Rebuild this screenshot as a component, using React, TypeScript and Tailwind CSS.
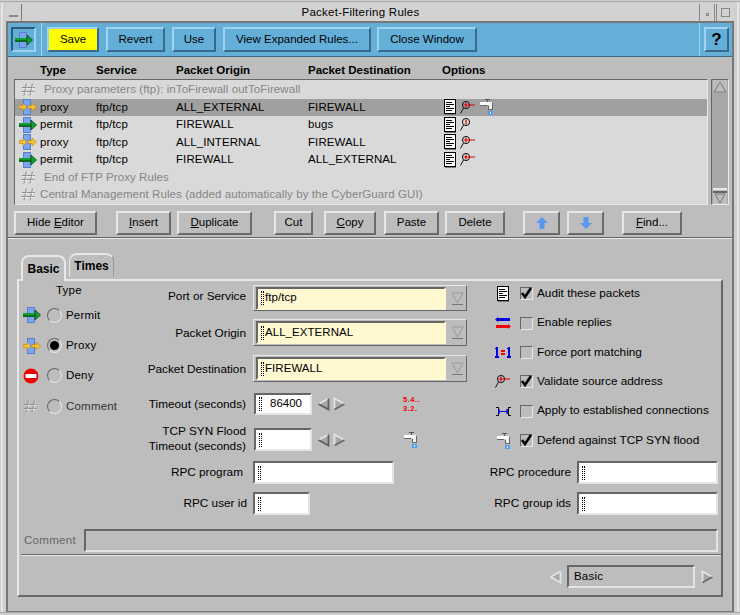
import React from "react";

const F = "font-['Liberation_Sans',Arial,sans-serif]";

function Permit() {
  return (
    <svg className="shrink-0" width="18" height="16" viewBox="0 0 18 16" shapeRendering="crispEdges">
      <rect x="4.5" y="0.5" width="7" height="15" fill="#78a4f0" stroke="#5a7fc8" />
      <rect x="0" y="6" width="13" height="2" fill="#10a030" />
      <rect x="0" y="8" width="13" height="2" fill="#0c6a20" />
      <path d="M12 3 L17.5 8 L12 13 Z" fill="#10a030" stroke="#063010" strokeWidth="0.7" shapeRendering="auto" />
    </svg>
  );
}
function Proxy() {
  return (
    <svg className="shrink-0" width="18" height="16" viewBox="0 0 18 16" shapeRendering="crispEdges">
      <rect x="4.5" y="0.5" width="7" height="15" fill="#78a4f0" stroke="#5a7fc8" />
      <path d="M0 6.5H4V4L8 8L4 12V9.5H0Z" fill="#f8c030" stroke="#a07818" strokeWidth="0.5" shapeRendering="auto" />
      <path d="M9 6.5H13V4L17.5 8L13 12V9.5H9Z" fill="#f8c030" stroke="#a07818" strokeWidth="0.5" shapeRendering="auto" />
    </svg>
  );
}
function Hash() {
  return (
    <svg className="shrink-0" width="15" height="13" viewBox="0 0 15 13">
      <path d="M5.5 0.5L3 12.5M11.5 0.5L9 12.5M1 4.5H14M0.5 8.5H13.5" stroke="#8c8c8c" strokeWidth="1.2" fill="none" />
      <path d="M6.5 1L4 13M12.5 1L10 13M1 5.5H14M0.5 9.5H13.5" stroke="#ececec" strokeWidth="0.6" fill="none" />
    </svg>
  );
}
function Doc() {
  return (
    <svg className="shrink-0" width="12" height="16" viewBox="0 0 12 16" shapeRendering="crispEdges">
      <rect x="0.5" y="0.5" width="11" height="14" fill="#fff" stroke="#000" />
      <rect x="1" y="15" width="11" height="1" fill="#777" />
      <path d="M2 3.5H8M2 5.5H10M2 7.5H6M2 9.5H10M2 11.5H8" stroke="#000" />
    </svg>
  );
}
function Lens({ line = true }: { line?: boolean }) {
  return (
    <svg className="shrink-0" width="16" height="15" viewBox="0 0 16 15">
      <circle cx="6" cy="5" r="3.6" fill="none" stroke="#111" />
      <path d="M3.5 8L0.5 13.5" stroke="#111" />
      <path d="M6 2.5V7.5" stroke="#e00000" strokeWidth="1.2" />
      {line && <path d="M3.5 5H15" stroke="#e00000" />}
    </svg>
  );
}
function Faucet() {
  return (
    <svg className="shrink-0" width="13" height="16" viewBox="0 0 13 16" shapeRendering="crispEdges">
      <rect x="5" y="0" width="5" height="1" fill="#555" />
      <rect x="7" y="1" width="1" height="2" fill="#555" />
      <rect x="0" y="3" width="9" height="3" fill="#fff" />
      <rect x="0" y="6" width="7" height="1" fill="#666" />
      <rect x="9" y="3" width="3" height="7" fill="#f4f4f4" />
      <rect x="8" y="7" width="1" height="3" fill="#666" />
      <rect x="12" y="4" width="1" height="6" fill="#666" />
      <rect x="8" y="10" width="5" height="1" fill="#666" />
      <rect x="8" y="12" width="5" height="4" fill="#4a9ff0" />
      <rect x="10" y="13" width="1" height="2" fill="#fff" />
    </svg>
  );
}
function NoEntry() {
  return (
    <svg className="shrink-0" width="16" height="16" viewBox="0 0 16 16">
      <circle cx="8" cy="8" r="7.5" fill="#f00000" />
      <rect x="2.5" y="6" width="11" height="4" fill="#fff" />
    </svg>
  );
}
function Replies() {
  return (
    <svg className="shrink-0" width="16" height="13" viewBox="0 0 16 13" shapeRendering="crispEdges">
      <rect x="2" y="1" width="13" height="3" fill="#0000e0" />
      <path d="M3 0V5L0 2.5Z" fill="#0000e0" shapeRendering="auto" />
      <rect x="1" y="8" width="13" height="3" fill="#f00000" />
      <path d="M13 7V12L16 9.5Z" fill="#f00000" shapeRendering="auto" />
    </svg>
  );
}
function PortMatch() {
  return (
    <svg className="shrink-0" width="16" height="12" viewBox="0 0 16 12" shapeRendering="crispEdges">
      <path d="M1 1H3V10H4V12H0V10H1V3H0V2H1Z" fill="#0000e0" />
      <path d="M13 1H15V10H16V12H12V10H13V3H12V2H13Z" fill="#0000e0" />
      <rect x="6" y="4" width="4" height="1.5" fill="#f00000" />
      <rect x="6" y="7" width="4" height="1.5" fill="#f00000" />
    </svg>
  );
}
function Established() {
  return (
    <svg className="shrink-0" width="16" height="9" viewBox="0 0 16 9" shapeRendering="crispEdges">
      <path d="M0.5 0.5H3V8.5H0.5M15.5 0.5H13V8.5H15.5" fill="none" stroke="#111" />
      <rect x="4" y="4" width="8" height="1" fill="#0000e0" />
      <path d="M4 2V7L3.5 4.5ZM12 2V7L12.5 4.5Z" stroke="#0000e0" fill="#0000e0" shapeRendering="auto" />
    </svg>
  );
}
function Arrow({ dir, dark = false }: { dir: "left" | "right"; dark?: boolean }) {
  return (
    <svg className="shrink-0" width="13" height="14" viewBox="0 0 13 14">
      {dir === "left" ? (
        <>
          <path d="M1.5 7L11.5 1.5V12.5Z" fill="#a8a8a8" />
          <path d="M1.5 7L11.5 1.5" stroke="#e4e4e4" strokeWidth="1.8" />
          <path d="M1.5 7L11.5 12.5V1.5" stroke={dark ? "#5f5f5f" : "#e4e4e4"} strokeWidth="1.8" fill="none" />
        </>
      ) : (
        <>
          <path d="M1.5 1.5L11.5 7L1.5 12.5Z" fill="#a8a8a8" />
          <path d="M1.5 12.5V1.5L11.5 7" stroke="#e4e4e4" strokeWidth="1.8" fill="none" />
          <path d="M1.5 12.5L11.5 7" stroke="#6a6a6a" strokeWidth="1.8" />
        </>
      )}
    </svg>
  );
}
function UpDown({ up }: { up: boolean }) {
  return (
    <svg className="shrink-0" width="12" height="12" viewBox="0 0 12 12">
      <path d={up ? "M6 0L12 6H8.5V12H3.5V6H0Z" : "M6 12L12 6H8.5V0H3.5V6H0Z"} fill="#5b97f0" />
    </svg>
  );
}
function Caret() {
  return <span className="inline-block h-[14px] w-[3px] shrink-0 border-x border-dotted border-black" />;
}

function GrayBtn({ w, ml, children }: { w: string; ml: string; children: React.ReactNode }) {
  return (
    <div className={`${w} ${ml} flex h-[24px] shrink-0 items-center justify-center border-2 border-t-[#e6e6e6] border-l-[#e6e6e6] border-r-[#6a6a6a] border-b-[#6a6a6a] bg-[#bdbdbd] text-[11.5px] text-black`}>
      {children}
    </div>
  );
}
function BlueBtn({ w, ml, children, yellow }: { w: string; ml: string; children: React.ReactNode; yellow?: boolean }) {
  return (
    <div className={`${w} ${ml} flex h-[25px] shrink-0 items-center justify-center border-2 border-t-[#9fd2ec] border-l-[#9fd2ec] border-r-[#38688a] border-b-[#38688a] text-[11.5px] text-black ${yellow ? "bg-[#ffff00]" : "bg-[#64afd8]"}`}>
      {children}
    </div>
  );
}

const COLS = "grid grid-cols-[56px_80px_132px_134px_1fr]";

function Row({ icon, type, service, origin, dest, opts, selected }: any) {
  return (
    <div className={`flex h-[17.5px] items-center text-[11.5px] tracking-[0.08px] text-black ${selected ? "bg-[#a0a0a0]" : ""}`}>
      <div className="flex w-[24px] shrink-0 justify-center pl-[2px]">{icon}</div>
      <div className={`${COLS} flex-1 pl-[1px]`}>
        <span>{type}</span>
        <span>{service}</span>
        <span>{origin}</span>
        <span>{dest}</span>
        <span className="flex items-center gap-[4px] pl-[2px]">{opts}</span>
      </div>
    </div>
  );
}
function CommentRow({ text, pl }: { text: string; pl: string }) {
  return (
    <div className="flex h-[17.5px] items-center text-[11.5px] tracking-[0.08px] text-[#858585]">
      <div className="flex w-[24px] shrink-0 justify-center pl-[2px]"><Hash /></div>
      <span className={pl}>{text}</span>
    </div>
  );
}
function TypeRow({ icon, label, on, dim }: { icon: React.ReactNode; label: string; on?: boolean; dim?: boolean }) {
  return (
    <div className="flex h-[30.4px] items-center">
      <div className="flex w-[22px] shrink-0 justify-start pl-[4px]">{icon}</div>
      <div className="ml-[6px] flex h-[15px] w-[15px] shrink-0 items-center justify-center rounded-full border border-t-[#666] border-l-[#666] border-r-[#e8e8e8] border-b-[#e8e8e8]">
        {on && <div className="h-[9px] w-[9px] rounded-full bg-black" />}
      </div>
      <span className={`ml-[4px] text-[11.5px] tracking-[0.2px] ${dim ? "text-[#333]" : "text-black"}`}>{label}</span>
    </div>
  );
}
function Combo({ h, mt, value }: { h: string; mt: string; value: string }) {
  return (
    <div className={`${mt} ml-[153px] flex ${h} w-[214px] items-center border border-t-[#e8e8e8] border-l-[#e8e8e8] border-r-[#666] border-b-[#666] pl-[2px] pr-[1px]`}>
      <div className="flex h-full max-h-[23px] w-[191px] items-center gap-[1px] border-2 border-t-[#666] border-l-[#666] border-r-[#fff8d0] border-b-[#fff8d0] bg-[#fff8d0] pl-[3px] text-[11.5px] tracking-[0.05px] text-black">
        <Caret />
        <span>{value}</span>
      </div>
      <div className="ml-[3px] flex w-[16px] flex-col items-center">
        <svg width="13" height="13" viewBox="0 0 13 13">
          <path d="M1 1H12L6.5 11Z" fill="#bdbdbd" stroke="#999" />
          <path d="M1 12.5H12" stroke="#777" />
        </svg>
      </div>
    </div>
  );
}
function Field({ w, h = "h-[23px]", children, bg = "bg-white" }: { w: string; h?: string; children?: React.ReactNode; bg?: string }) {
  return (
    <div className={`${w} ${h} ${bg} flex shrink-0 items-center border-2 border-t-[#666] border-l-[#666] border-r-[#e4e4e4] border-b-[#e4e4e4] pl-[3px] text-[11.5px] text-black`}>
      {children}
    </div>
  );
}
function OptRow({ icon, label, checked }: { icon: React.ReactNode; label: string; checked?: boolean }) {
  return (
    <div className="flex h-[29.4px] items-center">
      <div className="flex w-[16px] shrink-0 justify-center">{icon}</div>
      <div className="relative ml-[9px] h-[13px] w-[13px] shrink-0 border border-t-[#666] border-l-[#666] border-r-[#e8e8e8] border-b-[#e8e8e8]">
        {checked && (
          <svg className="absolute -left-px -top-[2px]" width="13" height="14" viewBox="0 0 13 14">
            <path d="M2 7L5 11L11 2" stroke="#000" strokeWidth="2.6" fill="none" />
          </svg>
        )}
      </div>
      <span className="ml-[4px] whitespace-nowrap text-[11.8px] text-black">{label}</span>
    </div>
  );
}

export default function App() {
  const U = ({ c }: { c: string }) => <span className="underline">{c}</span>;
  return (
    <div className={`${F} relative h-[615px] w-[740px] overflow-hidden bg-[#cfcfcf] pt-[1px]`}>
      <div className="h-[612px] border-y border-[#a8a8a8] px-[1px]">
        <div className="flex h-full flex-col border-x-2 border-[#e4e4e4] px-[3px] pt-[2px]">
          {/* Title bar */}
          <div className="flex h-[19px] items-center border-b-2 border-[#777] bg-[#d2d2d2]">
            <div className="flex h-[17px] w-[16px] items-end justify-center border-r border-[#777] pb-[4px]">
              <div className="h-[2px] w-[9px] border border-[#888]" />
            </div>
            <span className="flex-1 text-center text-[11.5px] tracking-[0.25px] text-black">Packet-Filtering Rules</span>
            <div className="flex h-[17px] w-[16px] items-end justify-center border-x border-[#888] pb-[5px]">
              <div className="h-[3px] w-[3px] border border-[#888]" />
            </div>
            <div className="ml-[1px] flex h-[17px] w-[18px] items-center justify-center border-l border-[#888]">
              <div className="h-[9px] w-[9px] border border-[#888]" />
            </div>
          </div>

          {/* Body */}
          <div className="flex flex-1 flex-col border-x-2 border-b border-x-[#777] border-b-[#777] bg-[#bdbdbd]">
            {/* Toolbar */}
            <div className="flex h-[34px] shrink-0 items-center border-b border-[#38688a] bg-[#64afd8]">
              <div className="flex h-full w-[34px] shrink-0 items-center justify-center border-r border-[#9fd2ec] pr-[2px]">
                <div className="flex h-[25px] w-[25px] items-center justify-center border-2 border-t-[#2f5a78] border-l-[#2f5a78] border-r-[#9fd2ec] border-b-[#9fd2ec]">
                  <Permit />
                </div>
              </div>
              <BlueBtn w="w-[52px]" ml="ml-[5px]" yellow>Save</BlueBtn>
              <BlueBtn w="w-[59px]" ml="ml-[7px]">Revert</BlueBtn>
              <BlueBtn w="w-[44px]" ml="ml-[7px]">Use</BlueBtn>
              <BlueBtn w="w-[148px]" ml="ml-[7px]">View Expanded Rules...</BlueBtn>
              <BlueBtn w="w-[100px]" ml="ml-[6px]">Close Window</BlueBtn>
              <div className="ml-[222px] flex h-full w-[1px] shrink-0 bg-[#9fd2ec]" />
              <div className="ml-[4px] flex h-[25px] w-[25px] shrink-0 items-center justify-center border-2 border-t-[#9fd2ec] border-l-[#9fd2ec] border-r-[#38688a] border-b-[#38688a] bg-[#64afd8] text-[17px] font-bold text-black">?</div>
            </div>

            {/* Column headers */}
            <div className={`${COLS} h-[22px] shrink-0 items-end pl-[32px] text-[11.5px] font-bold text-black`}>
              <span>Type</span>
              <span>Service</span>
              <span>Packet Origin</span>
              <span>Packet Destination</span>
              <span>Options</span>
            </div>

            {/* List */}
            <div className="flex h-[126px] shrink-0">
              <div className="ml-[6px] h-full w-[694px] shrink-0 border border-t-[#666] border-l-[#666] border-r-[#e8e8e8] border-b-[#e8e8e8] bg-[#d9d9d9] pt-[1px]">
                <CommentRow text="Proxy parameters (ftp): inToFirewall outToFirewall" pl="pl-[5px]" />
                <Row selected icon={<Proxy />} type="proxy" service="ftp/tcp" origin="ALL_EXTERNAL" dest="FIREWALL" opts={<><Doc /><Lens /><Faucet /></>} />
                <Row icon={<Permit />} type="permit" service="ftp/tcp" origin="FIREWALL" dest="bugs" opts={<><Doc /><Lens line={false} /></>} />
                <Row icon={<Proxy />} type="proxy" service="ftp/tcp" origin="ALL_INTERNAL" dest="FIREWALL" opts={<><Doc /><Lens /></>} />
                <Row icon={<Permit />} type="permit" service="ftp/tcp" origin="FIREWALL" dest="ALL_EXTERNAL" opts={<><Doc /><Lens /></>} />
                <CommentRow text="End of FTP Proxy Rules" pl="pl-[5px]" />
                <CommentRow text="Central Management Rules (added automatically by the CyberGuard GUI)" pl="pl-[1px]" />
              </div>
              <div className="ml-[3px] flex h-full w-[18px] shrink-0 flex-col items-center border border-t-[#666] border-l-[#666] border-r-[#e8e8e8] border-b-[#e8e8e8] bg-[#a8a8a8]">
                <svg width="14" height="13" viewBox="0 0 14 13" className="shrink-0 bg-[#bdbdbd]"><path d="M7 2L13 12H1Z" fill="#bdbdbd" stroke="#777" /></svg>
                <div className="h-[95px] w-full" />
                <div className="h-[5px] w-[14px] border-y-2 border-b-[#666] border-t-[#e8e8e8] bg-[#bdbdbd]" />
                <svg width="14" height="11" viewBox="0 0 14 11" className="mt-auto shrink-0 bg-[#bdbdbd]"><path d="M2 1H12L7 10Z" fill="#bdbdbd" stroke="#777" /></svg>
              </div>
            </div>

            {/* Buttons */}
            <div className="mt-[6px] flex shrink-0">
              <GrayBtn w="w-[83px]" ml="ml-[6px]"><span>Hide <U c="E" />ditor</span></GrayBtn>
              <GrayBtn w="w-[55px]" ml="ml-[19px]"><span><U c="I" />nsert</span></GrayBtn>
              <GrayBtn w="w-[75px]" ml="ml-[6px]"><span><U c="D" />uplicate</span></GrayBtn>
              <GrayBtn w="w-[39px]" ml="ml-[22px]">Cut</GrayBtn>
              <GrayBtn w="w-[52px]" ml="ml-[11px]"><span><U c="C" />opy</span></GrayBtn>
              <GrayBtn w="w-[55px]" ml="ml-[8px]">Paste</GrayBtn>
              <GrayBtn w="w-[60px]" ml="ml-[6px]">Delete</GrayBtn>
              <GrayBtn w="w-[37px]" ml="ml-[18px]"><UpDown up /></GrayBtn>
              <GrayBtn w="w-[37px]" ml="ml-[7px]"><UpDown up={false} /></GrayBtn>
              <GrayBtn w="w-[60px]" ml="ml-[18px]"><span><U c="F" />ind...</span></GrayBtn>
            </div>

            <div className="mt-[2px] h-[2px] shrink-0 border-y border-t-[#666] border-b-[#e8e8e8]" />

            {/* Tabs */}
            <div className="relative z-10 ml-[13px] mt-[14px] flex shrink-0 items-end">
              <div className="-mb-[2px] flex h-[26px] w-[45px] items-center justify-center rounded-t-[8px] border-x-2 border-t-2 border-[#e8e8e8] bg-[#bdbdbd] text-[12px] font-bold text-black">Basic</div>
              <div className="mb-[2px] ml-[3px] flex h-[24px] w-[45px] items-center justify-center rounded-t-[8px] border-x border-t-2 border-[#e8e8e8] border-r-[#999] text-[12px] font-bold text-black">Times</div>
            </div>

            {/* Tab panel */}
            <div className="ml-[9px] flex h-[318px] w-[706px] shrink-0 flex-col border-2 border-t-[#e8e8e8] border-l-[#e8e8e8] border-r-[#666] border-b-[#666]">
              <div className="flex h-[170px]">
                {/* Type column */}
                <div className="w-[81px] shrink-0">
                  <div className="h-[19px] pl-[37px] pt-[1px] text-[11.5px] tracking-[0.2px] text-black">Type</div>
                  <TypeRow icon={<Permit />} label="Permit" />
                  <TypeRow icon={<Proxy />} label="Proxy" on />
                  <TypeRow icon={<NoEntry />} label="Deny" />
                  <TypeRow icon={<Hash />} label="Comment" dim />
                </div>

                {/* Form column */}
                <div className="relative w-[395px] shrink-0">
                  <Combo mt="mt-[4px]" h="h-[26px]" value="ftp/tcp" />
                  <Combo mt="mt-[8px]" h="h-[27px]" value="ALL_EXTERNAL" />
                  <Combo mt="mt-[9px]" h="h-[27px]" value="FIREWALL" />
                  <div className="ml-[154px] mt-[11px] flex items-center">
                    <Field w="w-[58px]" h="h-[22px]"><Caret /><span className="ml-[8px]">86400</span></Field>
                    <div className="ml-[5px] flex gap-[3px]"><Arrow dir="left" dark /><Arrow dir="right" /></div>
                    <div className="ml-[57px] text-[7.5px] font-bold leading-[9px] tracking-[0.5px] text-[#f00000]">5.4..<br />3.2.</div>
                  </div>
                  <div className="ml-[154px] mt-[13px] flex items-center">
                    <Field w="w-[58px]"><Caret /></Field>
                    <div className="ml-[5px] flex gap-[3px]"><Arrow dir="left" dark /><Arrow dir="right" /></div>
                    <div className="ml-[58px]"><Faucet /></div>
                  </div>
                  {/* Labels beside the form rows */}
                  <div className="absolute left-[-81px] top-0 w-[227px] text-right text-[11.8px] text-black">
                    <div className="mt-[7px] h-[17px]">Port or Service</div>
                    <div className="mt-[20px] h-[17px]">Packet Origin</div>
                    <div className="mt-[19px] h-[17px]">Packet Destination</div>
                    <div className="mt-[18px] h-[17px]">Timeout (seconds)</div>
                    <div className="mt-[11px] leading-[15px]">TCP SYN Flood<br />Timeout (seconds)</div>
                  </div>
                </div>

                {/* Options column */}
                <div className="-mt-[2px] shrink-0">
                  <OptRow icon={<Doc />} label="Audit these packets" checked />
                  <OptRow icon={<Replies />} label="Enable replies" />
                  <OptRow icon={<PortMatch />} label="Force port matching" />
                  <OptRow icon={<Lens />} label="Validate source address" checked />
                  <OptRow icon={<Established />} label="Apply to established connections" />
                  <OptRow icon={<Faucet />} label="Defend against TCP SYN flood" checked />
                </div>
              </div>

              {/* RPC rows */}
              <div className="mt-[10px] flex h-[23px] items-center text-[11.8px] text-black">
                <span className="w-[224px] shrink-0 text-right">RPC program</span>
                <div className="ml-[10px]"><Field w="w-[141px]"><Caret /></Field></div>
                <span className="ml-[4px] w-[173px] shrink-0 text-right">RPC procedure</span>
                <div className="ml-[6px]"><Field w="w-[141px]"><Caret /></Field></div>
              </div>
              <div className="mt-[8px] flex h-[23px] items-center text-[11.8px] text-black">
                <span className="w-[228px] shrink-0 text-right">RPC user id</span>
                <div className="ml-[6px]"><Field w="w-[57px]"><Caret /></Field></div>
                <span className="ml-[88px] w-[173px] shrink-0 text-right">RPC group ids</span>
                <div className="ml-[6px]"><Field w="w-[141px]"><Caret /></Field></div>
              </div>

              {/* Comment */}
              <div className="mt-[14px] flex h-[23px] items-center">
                <span className="ml-[5px] w-[60px] shrink-0 text-[11.5px] tracking-[0.3px] text-[#666]">Comment</span>
                <Field w="w-[634px]" bg="bg-[#bdbdbd]" />
              </div>
              <div className="ml-[2px] mt-[2px] h-[2px] w-[700px] border-y border-t-[#666] border-b-[#e8e8e8]" />

              {/* Pager */}
              <div className="mt-[9px] flex items-center justify-end pr-[7px]">
                <Arrow dir="left" />
                <div className="ml-[5px] flex h-[23px] w-[128px] items-center border-2 border-t-[#666] border-l-[#666] border-r-[#e4e4e4] border-b-[#e4e4e4] pl-[5px] text-[11.5px] tracking-[0.2px] text-black">Basic</div>
                <div className="ml-[6px]"><Arrow dir="right" /></div>
              </div>
            </div>
          </div>
        </div>
      </div>
    </div>
  );
}
